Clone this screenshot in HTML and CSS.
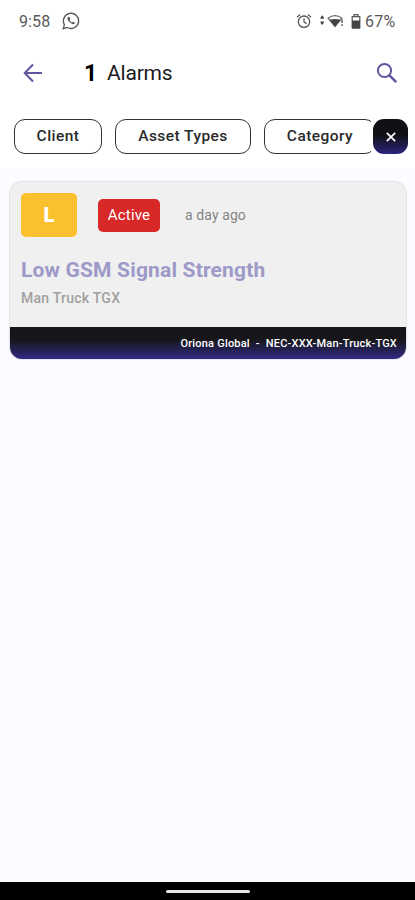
FILE: index.html
```html
<!DOCTYPE html>
<html lang="en">
<head>
  <meta charset="UTF-8">
  <meta name="viewport" content="width=device-width, initial-scale=1">
  <title>Alarms</title>
  <link rel="stylesheet" href="styles.css">
</head>
<body>
  <div class="top">
    <div class="status-bar">
      <span class="clock">9:58</span>
      <svg class="whatsapp" width="18" height="18" viewBox="0 0 18 18">
        <path d="M1.3 16.7l1.1-4.1a7.6 7.6 0 1 1 2.9 2.900z" fill="none" stroke="#555" stroke-width="1.300"/>
        <path d="M6.100 4.900c-1.300 1-.7 3.200 1.300 5.200s4.400 2.700 5.300 1.300c.3-.8 0-1-1.600-1.700l-.9.9c-1.200-.4-2.200-1.400-2.700-2.600l.8-.9c-.6-1.700-1-2.400-2.200-2.200z" fill="#555"/>
      </svg>
      <div class="status-icons">
        <svg class="alarm" width="16" height="16" viewBox="0 0 16 16" fill="none" stroke="#555" stroke-width="1.300">
          <circle cx="8" cy="8.700" r="5.700"/>
          <path d="M8 5.200v3.800l2.500 1.600M1 4.200l3-2.600M15 4.200l-3-2.600"/>
        </svg>
        <svg class="wifi" width="24" height="14" viewBox="0 0 24 14">
          <path d="M.5 3.500L2.200 1.200l1.700 2.300v1.300H.5zM.5 7.500h3.400v1.300l-1.700 2.300L.5 8.800z" fill="#444"/>
          <path d="M8 4.200Q15 -1 22 4.200L15 12.500z" fill="none" stroke="#666" stroke-width="1.200"/>
          <path d="M9.500 5.800Q15 4.200 20.500 5.800L15 12.500z" fill="#444"/>
          <path d="M22 5.500v3.500M22 10.300v1.700" stroke="#555" stroke-width="1.400"/>
        </svg>
        <svg class="battery" width="10" height="15" viewBox="0 0 10 15">
          <path d="M3 2V.7h4V2M1.200 7V2.600h7.600V7" fill="none" stroke="#555" stroke-width="1.200"/>
          <path d="M.6 6.500h8.800V14a.8.8 0 0 1-.8.8H1.400a.8.8 0 0 1-.8-.8z" fill="#444"/>
        </svg>
        <span class="percent">67%</span>
      </div>
    </div>

    <div class="header">
      <svg class="back" width="20" height="20" viewBox="0 0 20 20" fill="none" stroke="#5f56a0" stroke-width="2">
        <path d="M19 10H2M10 1.500L1.700 10l8.300 8.500"/>
      </svg>
      <h1><span class="count">1</span><span class="title">Alarms</span></h1>
      <svg class="search" width="22" height="22" viewBox="0 0 22 22" fill="none" stroke="#5f56a0">
        <circle cx="8.500" cy="8.500" r="6.600" stroke-width="2"/>
        <path d="M13.200 13.200l7 7" stroke-width="2.500"/>
      </svg>
    </div>

    <div class="filters">
      <div class="chips">
        <button class="chip client">Client</button>
        <button class="chip asset">Asset Types</button>
        <button class="chip category">Category</button>
      </div>
      <button class="clear" aria-label="Clear">
        <svg width="10" height="10" viewBox="0 0 10 10" stroke="#fff" stroke-width="1.700">
          <path d="M.8.8l8.400 8.400M9.200.8L.8 9.200"/>
        </svg>
      </button>
    </div>
  </div>

  <div class="card">
    <div class="card-body">
      <div class="card-row">
        <span class="level">L</span>
        <span class="state">Active</span>
        <span class="time">a day ago</span>
      </div>
      <h2>Low GSM Signal Strength</h2>
      <p>Man Truck TGX</p>
    </div>
    <div class="card-footer">
      <span class="owner">Oriona Global</span>
      <span class="dash">-</span>
      <span class="asset-id">NEC-XXX-Man-Truck-TGX</span>
    </div>
  </div>

  <div class="nav-bar"><div class="nav-handle"></div></div>
</body>
</html>
```
FILE: styles.css
```css
* {
  box-sizing: border-box;
}

body {
  margin: 0;
  height: 900px;
  display: flex;
  flex-direction: column;
  overflow: hidden;
  font-family: Roboto, sans-serif;
  background-color: #fdfbff;
}

svg {
  display: block;
  flex: none;
}

button {
  font-family: inherit;
  padding: 0;
}

.top {
  height: 168px;
  background-color: #ffffff;
}

/* status bar */

.status-bar {
  height: 42px;
  padding: 0 19px 0 19px;
  display: flex;
  align-items: center;
  color: #5a5a5a;
}

.clock {
  width: 43px;
  font-size: 16px;
  letter-spacing: 0.1px;
}

.status-icons {
  margin-left: auto;
  display: flex;
  align-items: center;
}

.alarm {
  margin-right: 8px;
}

.wifi {
  margin-right: 7px;
}

.battery {
  margin-right: 4px;
}

.percent {
  width: 31px;
  font-size: 16px;
  letter-spacing: 0.3px;
  white-space: nowrap;
}

/* header */

.header {
  height: 62px;
  padding: 0 17px 0 23px;
  display: flex;
  align-items: center;
}

h1 {
  margin: 0 auto 0 41px;
  font-size: 21px;
  font-weight: 400;
  color: #1b1b1f;
  display: flex;
  align-items: center;
}

.count {
  width: 23px;
  font-size: 23px;
  font-weight: 700;
  color: #000000;
}

.title {
  letter-spacing: -0.2px;
}

/* filters */

.filters {
  display: flex;
  padding: 15px 7px 0 14px;
}

.chips {
  display: flex;
  gap: 13px;
  width: 357px;
  overflow: hidden;
}

.chip {
  flex: none;
  height: 35px;
  padding-bottom: 1px;
  border: 1px solid #333333;
  border-radius: 11px;
  background: none;
  font-size: 15.5px;
  font-weight: 500;
  letter-spacing: 0.45px;
  color: #2a2a2a;
}

.client {
  width: 88px;
}

.asset {
  width: 136px;
}

.category {
  width: 112px;
}

.clear {
  width: 35px;
  height: 35px;
  margin-left: 2px;
  flex: none;
  display: flex;
  align-items: center;
  justify-content: center;
  border: none;
  border-radius: 11px;
  background: linear-gradient(to bottom, #101014 45%, #2c257c);
}

/* alarm card */

.card {
  height: 177px;
  margin: 14px 9px 0 10px;
  border-radius: 12px;
  overflow: hidden;
  background-color: #f0f0f0;
  box-shadow: 0 0 1px 1px #e3e2e6;
}

.card-body {
  height: 145px;
  padding: 11px 12px 0 11px;
}

.card-row {
  display: flex;
  align-items: center;
}

.level,
.state {
  display: flex;
  align-items: center;
  justify-content: center;
  border-radius: 5px;
  color: #ffffff;
}

.level {
  width: 56px;
  height: 44px;
  background-color: #fbc02d;
  font-size: 20px;
  font-weight: 900;
}

.state {
  width: 62px;
  height: 33px;
  margin-left: 21px;
  background-color: #d82828;
  font-size: 15px;
  letter-spacing: 0.2px;
}

.time {
  margin-left: 25px;
  font-size: 14px;
  letter-spacing: 0.1px;
  color: #858585;
}

h2 {
  margin: 21px 0 0;
  font-size: 21px;
  line-height: 24px;
  font-weight: 700;
  letter-spacing: 0.17px;
  color: #9d99c8;
}

p {
  margin: 7px 0 0;
  font-size: 14px;
  line-height: 18px;
  font-weight: 500;
  letter-spacing: 0.25px;
  color: #a0a0a0;
}

.card-footer {
  height: 32px;
  padding-right: 9px;
  display: flex;
  align-items: center;
  justify-content: flex-end;
  gap: 6px;
  font-size: 11px;
  font-weight: 500;
  letter-spacing: 0.2px;
  color: #ffffff;
  background: linear-gradient(to bottom, #17171b 40%, #302a85);
}

/* system navigation */

.nav-bar {
  height: 18px;
  margin-top: auto;
  display: flex;
  justify-content: center;
  padding-top: 8px;
  background-color: #000000;
}

.nav-handle {
  width: 84px;
  height: 3px;
  border-radius: 2px;
  background-color: #e8e8e8;
}
```
